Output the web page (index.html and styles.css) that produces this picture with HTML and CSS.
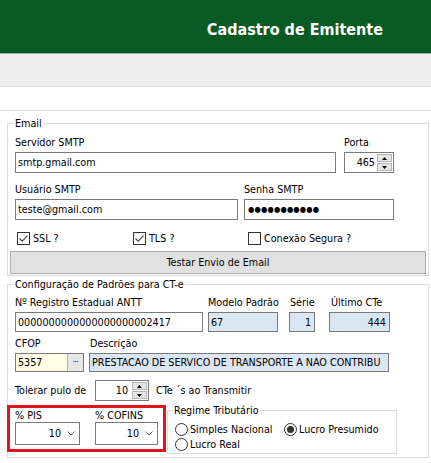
FILE: index.html
```html
<!DOCTYPE html>
<html lang="pt-BR">
<head>
<meta charset="utf-8">
<title>Cadastro de Emitente</title>
<link rel="stylesheet" href="styles.css">
</head>
<body>
<header class="header"><h1 class="title">Cadastro de Emitente</h1></header>
<div class="toolbar"></div>
<div class="strip"></div>
<main class="content">
  <fieldset class="group group-email">
    <legend class="legend">Email</legend>
    <div class="row">
      <div class="field w-servidor">
        <div class="lbl">Servidor SMTP</div>
        <div class="edit h21">smtp.gmail.com</div>
      </div>
      <div class="field w-porta">
        <div class="lbl">Porta</div>
        <div class="spin h21">
          <div class="spin-val">465</div>
          <div class="spin-btns">
            <div class="sbtn"><svg width="5" height="3" viewBox="0 0 5 3"><path d="M0 3 L2.5 0 L5 3Z" fill="#000"/></svg></div>
            <div class="sbtn"><svg width="5" height="3" viewBox="0 0 5 3"><path d="M0 0 L2.5 3 L5 0Z" fill="#000"/></svg></div>
          </div>
        </div>
      </div>
    </div>
    <div class="row row-2">
      <div class="field w-usuario">
        <div class="lbl">Usuário SMTP</div>
        <div class="edit h21">teste@gmail.com</div>
      </div>
      <div class="field w-senha">
        <div class="lbl">Senha SMTP</div>
        <div class="edit h21 pwd">●●●●●●●●●●●</div>
      </div>
    </div>
    <div class="checks">
      <div class="check c-ssl"><svg class="cb" width="13" height="13" viewBox="0 0 13 13"><rect x="0.5" y="0.5" width="12" height="12" fill="#fff" stroke="#333"/><path d="M2.5 6.5 L5.2 9.2 L10.5 3.6" fill="none" stroke="#444" stroke-width="1.1"/></svg><span>SSL ?</span></div>
      <div class="check c-tls"><svg class="cb" width="13" height="13" viewBox="0 0 13 13"><rect x="0.5" y="0.5" width="12" height="12" fill="#fff" stroke="#333"/><path d="M2.5 6.5 L5.2 9.2 L10.5 3.6" fill="none" stroke="#444" stroke-width="1.1"/></svg><span>TLS ?</span></div>
      <div class="check"><svg class="cb" width="13" height="13" viewBox="0 0 13 13"><rect x="0.5" y="0.5" width="12" height="12" fill="#fff" stroke="#333"/></svg><span>Conexão Segura ?</span></div>
    </div>
    <div class="btn">Testar Envio de Email</div>
  </fieldset>

  <fieldset class="group group-cte">
    <legend class="legend">Configuração de Padrões para CT-e</legend>
    <div class="row">
      <div class="field w-antt">
        <div class="lbl">Nº Registro Estadual ANTT</div>
        <div class="edit h20">0000000000000000000002417</div>
      </div>
      <div class="field w-modelo">
        <div class="lbl">Modelo Padrão</div>
        <div class="edit h20 ro">67</div>
      </div>
      <div class="field w-serie">
        <div class="lbl lbl-serie">Série</div>
        <div class="edit h20 ro num">1</div>
      </div>
      <div class="field w-ultimo">
        <div class="lbl lbl-ultimo">Último CTe</div>
        <div class="edit h20 ro num">444</div>
      </div>
    </div>
    <div class="row row-cfop">
      <div class="field w-cfop">
        <div class="lbl">CFOP</div>
        <div class="edit h19 cfop"><span class="cfop-val">5357</span><span class="ellip">···</span></div>
      </div>
      <div class="field w-desc">
        <div class="lbl lbl-desc">Descrição</div>
        <div class="edit h19 ro">PRESTACAO DE SERVICO DE TRANSPORTE A NAO CONTRIBU</div>
      </div>
    </div>
    <div class="row row-tol">
      <div class="tol-lbl">Tolerar pulo de</div>
      <div class="spin h21 w-tol">
        <div class="spin-val">10</div>
        <div class="spin-btns">
          <div class="sbtn"><svg width="5" height="3" viewBox="0 0 5 3"><path d="M0 3 L2.5 0 L5 3Z" fill="#000"/></svg></div>
          <div class="sbtn"><svg width="5" height="3" viewBox="0 0 5 3"><path d="M0 0 L2.5 3 L5 0Z" fill="#000"/></svg></div>
        </div>
      </div>
      <div class="tol-after">CTe ´s ao Transmitir</div>
    </div>
    <div class="row row-bottom">
      <div class="redbox">
        <div class="field w-pis">
          <div class="lbl lbl-tight">% PIS</div>
          <div class="combo"><span>10</span><svg width="8" height="5" viewBox="0 0 8 5"><path d="M0.5 0.5 L4 4 L7.5 0.5" fill="none" stroke="#666"/></svg></div>
        </div>
        <div class="field w-cofins">
          <div class="lbl lbl-tight">% COFINS</div>
          <div class="combo"><span>10</span><svg width="8" height="5" viewBox="0 0 8 5"><path d="M0.5 0.5 L4 4 L7.5 0.5" fill="none" stroke="#666"/></svg></div>
        </div>
      </div>
      <fieldset class="group group-regime">
        <legend class="legend">Regime Tributário</legend>
        <div class="radios">
          <div class="radio r-col1"><svg width="13" height="13" viewBox="0 0 13 13"><circle cx="6.5" cy="6.5" r="6" fill="#fff" stroke="#333"/></svg><span>Simples Nacional</span></div>
          <div class="radio"><svg width="13" height="13" viewBox="0 0 13 13"><circle cx="6.5" cy="6.5" r="6" fill="#fff" stroke="#333"/><circle cx="6.5" cy="6.5" r="3.5" fill="#333"/></svg><span>Lucro Presumido</span></div>
          <div class="radio r-col1"><svg width="13" height="13" viewBox="0 0 13 13"><circle cx="6.5" cy="6.5" r="6" fill="#fff" stroke="#333"/></svg><span>Lucro Real</span></div>
        </div>
      </fieldset>
    </div>
  </fieldset>
</main>
</body>
</html>
```
FILE: styles.css
```css
* { box-sizing: border-box; }
html, body { margin: 0; padding: 0; }
body {
  width: 431px;
  height: 463px;
  overflow: hidden;
  background: #fff;
  color: #000;
  font-family: "DejaVu Sans Condensed", "DejaVu Sans", sans-serif;
  font-stretch: condensed;
  font-size: 10.7px;
  line-height: 13px;
}

.header {
  height: 54px;
  background: #0a5b23;
  border-bottom: 1px solid #9fa8a2;
  display: flex;
  justify-content: flex-end;
  align-items: flex-start;
  padding: 20px 48px 0 0;
}
.title {
  margin: 0;
  color: #fff;
  font-size: 16px;
  font-weight: bold;
  line-height: 19px;
}
.toolbar {
  height: 33px;
  background: #efefef;
  border-bottom: 1px solid #d9d9d9;
}
.strip {
  height: 24px;
  background: #fff;
  border-bottom: 1px solid #dadada;
}

.group {
  min-width: 0;
  margin: 6px 2px 0 7px;
  padding: 6px 2px 1px 7px;
  border: 1px solid #dcdcdc;
}
.legend {
  padding: 0 1px;
  margin-left: -1px;
  line-height: 13px;
}
.group-cte {
  margin-top: 2px;
  padding-top: 5px;
  padding-bottom: 3px;
}

.row { display: flex; align-items: flex-start; }
.field { display: flex; flex-direction: column; flex: none; }
.lbl { height: 13px; margin-bottom: 3px; white-space: nowrap; }
.lbl-tight { margin-bottom: 0; }

.edit {
  border: 1px solid #7a7a7a;
  background: #fff;
  padding: 0 3px 0 2px;
  white-space: nowrap;
  overflow: hidden;
  display: flex;
  align-items: center;
}
.h21 { height: 21px; }
.h20 { height: 20px; }
.h19 { height: 19px; }
.ro { background: #dbe6f3; }
.num { justify-content: flex-end; }
.pwd { font-size: 8px; letter-spacing: 0.2px; padding-left: 3px; }

.w-servidor { width: 321px; margin-right: 8px; }
.w-porta { width: 50px; }
.row-2 { margin-top: 10px; }
.w-usuario { width: 223px; margin-right: 6px; }
.w-senha { width: 150px; }

.spin {
  border: 1px solid #7a7a7a;
  background: #fff;
  display: flex;
  align-items: stretch;
}
.spin-val {
  flex: 1;
  display: flex;
  align-items: center;
  justify-content: flex-end;
  padding-right: 2px;
}
.spin-btns {
  width: 16px;
  padding: 1px 1px 1px 0;
  display: flex;
  flex-direction: column;
  gap: 1px;
}
.sbtn {
  flex: 1;
  background: #e6e6e6;
  border: 1px solid #b4b4b4;
  display: flex;
  align-items: center;
  justify-content: center;
}
.sbtn svg { display: block; }

.checks { display: flex; margin-top: 12px; height: 13px; }
.check { display: flex; align-items: center; gap: 3px; white-space: nowrap; }
.cb { display: block; flex: none; }
.c-ssl { width: 116px; margin-left: 2px; }
.c-tls { width: 115px; }

.btn {
  margin: 6px 0 0 -5px;
  width: 416px;
  height: 23px;
  background: #e1e1e1;
  border: 1px solid #adadad;
  display: flex;
  align-items: center;
  justify-content: center;
}

.w-antt { width: 188px; margin-right: 5px; }
.w-modelo { width: 70px; margin-right: 11px; }
.w-serie { width: 26px; margin-right: 14px; }
.w-ultimo { width: 61px; }
.lbl-serie { padding-left: 1px; }
.lbl-ultimo { padding-left: 2px; }

.row-cfop { margin-top: 5px; }
.w-cfop { width: 69px; margin-right: 5px; }
.w-desc { width: 300px; }
.lbl-desc { padding-left: 1px; }
.cfop {
  background: #fffde6;
  padding: 0 0 0 2px;
  align-items: stretch;
}
.cfop-val { flex: 1; display: flex; align-items: center; }
.ellip {
  width: 16px;
  background: #e6e6e6;
  border-left: 1px solid #b4b4b4;
  display: flex;
  align-items: center;
  justify-content: center;
  font-size: 8px;
  letter-spacing: -0.5px;
}

.row-tol { margin-top: 8px; align-items: center; }
.tol-lbl { width: 80px; white-space: nowrap; }
.w-tol { width: 54px; margin-right: 7px; }
.w-tol .spin-val { padding-right: 4px; }

.row-bottom { margin-top: 4px; }
.redbox {
  display: flex;
  margin-left: -8px;
  width: 159px;
  height: 47px;
  border: 3px solid #e0141d;
  padding: 1px 0 0 5px;
  flex: none;
}
.w-pis { width: 65px; margin-right: 15px; }
.w-cofins { width: 63px; }
.combo {
  height: 23px;
  border: 1px solid #7a7a7a;
  background: #fff;
  display: flex;
  align-items: center;
  justify-content: flex-end;
  padding-right: 4px;
  gap: 6px;
}
.combo svg { display: block; }

.group-regime {
  margin: -1px 0 0 1px;
  width: 230px;
  height: 50px;
  padding: 5px 2px 0 6px;
}
.radios { display: flex; flex-wrap: wrap; }
.radio { display: flex; align-items: center; gap: 2px; height: 15px; white-space: nowrap; }
.radio svg { display: block; flex: none; }
.r-col1 { width: 109px; margin-left: 1px; }
```
